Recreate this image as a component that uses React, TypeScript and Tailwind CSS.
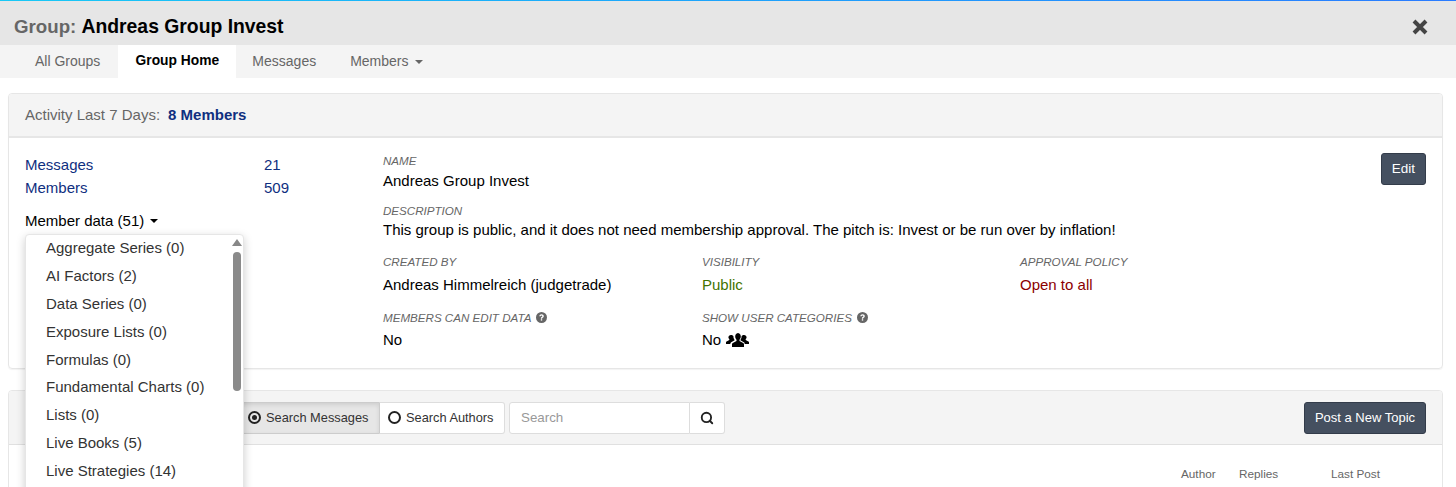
import { Search } from 'lucide-react'

const memberData = [
  'Aggregate Series (0)',
  'AI Factors (2)',
  'Data Series (0)',
  'Exposure Lists (0)',
  'Formulas (0)',
  'Fundamental Charts (0)',
  'Lists (0)',
  'Live Books (5)',
  'Live Strategies (14)',
]

function Caret() {
  return <span className="inline-block w-0 h-0 border-x-[4px] border-x-transparent border-t-[4px] border-t-current" />
}

function Help() {
  return (
    <svg viewBox="0 0 16 16" className="w-[11px] h-[11px] inline-block ml-[5px] align-[-1px]">
      <circle cx="8" cy="8" r="8" fill="#666" />
      <path d="M4.800 6.200C4.900 4.300 6.300 3.300 8.100 3.300c1.900 0 3.200 1 3.200 2.700 0 1.200-.7 1.800-1.500 2.300-.7.500-.9.800-.9 1.400H7c0-1.200.4-1.800 1.200-2.300.7-.5 1-.8 1-1.300 0-.6-.5-1-1.200-1-.8 0-1.200.5-1.300 1.100z" fill="#fff" />
      <rect x="7" y="10.500" width="2" height="2" fill="#fff" />
    </svg>
  )
}

function Users() {
  return (
    <svg viewBox="0 0 23 14" className="w-[23px] h-[14px] ml-[5px]" fill="#000">
      <path d="M11.500 0c2 0 3.300 1.500 3.300 3.500 0 1.300-.6 2.500-1.300 3.200v1.200l3.700 2c.5.300.8.700.8 1.300V14H6v-2.800c0-.6.300-1 .8-1.300l3.700-2V6.700c-.7-.7-1.300-1.900-1.300-3.200 0-2 1.300-3.500 3.300-3.500z" />
      <path d="M5 2c1 0 1.900.4 2.400 1.100-.1 1.500.3 2.800 1.200 3.900v.3L5.200 9.200C4.500 9.600 4.300 10.200 4.300 11H0V9.300c0-.4.200-.7.600-.9l2.700-1.400v-1C2.800 5.500 2.400 4.700 2.400 4.400 2.400 3 3.500 2 5 2z" />
      <path d="M18 2c-1 0-1.900.4-2.400 1.100.1 1.500-.3 2.800-1.200 3.900v.3l3.400 1.900c.7.400.9 1 .9 1.800H23V9.300c0-.4-.2-.7-.6-.9l-2.700-1.400v-1c.5-.5.900-1.300.9-1.600C20.600 3 19.500 2 18 2z" />
    </svg>
  )
}

function Field({ label, value, help, valueClass, gap }: { label: string; value: React.ReactNode; help?: boolean; valueClass?: string; gap: string }) {
  return (
    <div>
      <div className="text-[11.6px] leading-[16px] italic text-[#666] uppercase">
        {label}
        {help && <Help />}
      </div>
      <div className={`${gap} text-[15px] leading-[20px] ${valueClass ?? 'text-black'}`}>{value}</div>
    </div>
  )
}

export default function App() {
  return (
    <div className="relative h-[487px] overflow-hidden bg-white font-['Liberation_Sans',Arial,sans-serif] text-black">
      <div className="h-px bg-gradient-to-r from-[#19c8f5] to-[#2a7bff]" />
      <div className="h-[44px] bg-[#e6e6e6] flex items-center justify-between pt-[8px] pl-[14px] pr-[28px]">
        <h1 className="text-[18.7px] font-bold">
          <span className="text-[#666]">Group:</span> <span className="text-[19.35px]">Andreas Group Invest</span>
        </h1>
        <svg viewBox="0 0 16 16" className="w-[16px] h-[16px]" stroke="#444" strokeWidth="4" strokeLinecap="butt">
          <path d="M2 2l12 12M14 2L2 14" />
        </svg>
      </div>
      <div className="h-[33px] bg-[#f4f4f4] flex pl-[17px] text-[14px] text-[#666]">
        <div className="px-[18px] flex items-center">All Groups</div>
        <div className="w-[118px] bg-white flex items-center justify-center font-bold text-[13.8px] text-black">Group Home</div>
        <div className="pl-[16px] pr-[17px] flex items-center">Messages</div>
        <div className="px-[17px] flex items-center gap-[6px]">Members <Caret /></div>
      </div>

      <div className="mx-[8px] mt-[15px] w-[1435px] h-[276px] rounded-[4px] border border-[#e6e6e6] shadow-[0_1px_1px_rgba(0,0,0,0.05)]">
        <div className="h-[44px] bg-[#f4f4f4] border-b-2 border-[#e6e6e6] rounded-t-[4px] flex items-center pl-[16px] text-[15px] text-[#666]">
          Activity Last 7 Days:
          <span className="ml-[8px] font-bold text-[#0f2f80]">8 Members</span>
        </div>
        <div className="flex pt-[15px] pl-[16px] pr-[16px]">
          <div className="w-[358px] shrink-0 text-[15px]">
            <div className="grid grid-cols-[239px_auto] justify-start leading-[23px] text-[#0f2f80]">
              <span>Messages</span><span>21</span>
              <span>Members</span><span>509</span>
            </div>
            <div className="mt-[10px] leading-[23px] flex items-center gap-[6px]">Member data (51) <Caret /></div>
          </div>
          <div className="grow">
            <Field label="Name" value="Andreas Group Invest" gap="mt-[2px]" />
            <div className="mt-[12px]">
              <Field label="Description" value="This group is public, and it does not need membership approval. The pitch is: Invest or be run over by inflation!" gap="mt-[1px]" />
            </div>
            <div className="mt-[14px] grid grid-cols-[319px_318px_auto] gap-y-[15px]">
              <Field label="Created By" value="Andreas Himmelreich (judgetrade)" gap="mt-[5px]" />
              <Field label="Visibility" value="Public" valueClass="text-[#3f7300]" gap="mt-[5px]" />
              <Field label="Approval Policy" value="Open to all" valueClass="text-[#8b0000]" gap="mt-[5px]" />
              <Field label="Members Can Edit Data" help value="No" gap="mt-[4px]" />
              <Field label="Show User Categories" help value={<span className="flex items-center">No <Users /></span>} gap="mt-[4px]" />
            </div>
          </div>
          <button className="self-start h-[32px] w-[45px] rounded-[3px] bg-[#455060] border border-[#333c4a] text-white text-[13.5px]">Edit</button>
        </div>
      </div>

      <div className="mx-[8px] mt-[21px] w-[1435px] h-[200px] rounded-[4px] border border-[#e6e6e6]">
        <div className="h-[54px] bg-[#f4f4f4] border-b border-[#e0e0e0] rounded-t-[4px] flex items-center pl-[230px] pr-[16px] text-[13px] text-[#333]">
          <div className="flex h-[32px] whitespace-nowrap text-[12.8px]">
            <div className="w-[141px] flex items-center pl-[8px] gap-[5px] bg-[#e6e6e6] border border-[#ccc] rounded-l-[3px] shadow-[inset_0_2px_4px_rgba(0,0,0,0.1)]">
              <span className="w-[13px] h-[13px] rounded-full border-2 border-[#222] flex items-center justify-center"><span className="w-[5px] h-[5px] rounded-full bg-[#222]" /></span>
              Search Messages
            </div>
            <div className="w-[125px] flex items-center pl-[8px] gap-[5px] bg-white border border-l-0 border-[#ddd] rounded-r-[3px]">
              <span className="w-[13px] h-[13px] rounded-full border-2 border-[#222]" />
              Search Authors
            </div>
          </div>
          <div className="ml-[4px] flex h-[32px]">
            <div className="w-[181px] bg-white border border-[#ddd] rounded-l-[3px] flex items-center pl-[11px] text-[13.33px] text-[#999]">Search</div>
            <div className="w-[35px] bg-white border border-l-0 border-[#ddd] rounded-r-[3px] flex items-center justify-center">
              <Search size={14} strokeWidth={3.2} className="text-[#222]" />
            </div>
          </div>
          <button className="ml-auto h-[32px] w-[122px] rounded-[3px] bg-[#455060] border border-[#333c4a] text-white">Post a New Topic</button>
        </div>
        <div className="relative h-[40px] text-[11.75px] text-[#666]">
          <span className="absolute left-[1172px] top-[20px]">Author</span>
          <span className="absolute left-[1230px] top-[20px]">Replies</span>
          <span className="absolute left-[1322px] top-[20px]">Last Post</span>
        </div>
      </div>

      <div className="absolute left-[25px] top-[234px] w-[219px] h-[300px] bg-white border border-[#e6e6e6] rounded-[4px] shadow-[0_3px_10px_rgba(0,0,0,0.2)] text-[15px] text-[#333] pl-[20px] pt-px">
        {memberData.map(m => (
          <div key={m} className="h-[27.9px] leading-[24px]">{m}</div>
        ))}
        <div className="absolute right-[1px] top-[4px] w-0 h-0 border-x-[5px] border-x-transparent border-b-[7px] border-b-[#888]" />
        <div className="absolute right-[2px] top-[17px] w-[8px] h-[139px] rounded-full bg-[#8a8a8a]" />
      </div>
    </div>
  )
}
